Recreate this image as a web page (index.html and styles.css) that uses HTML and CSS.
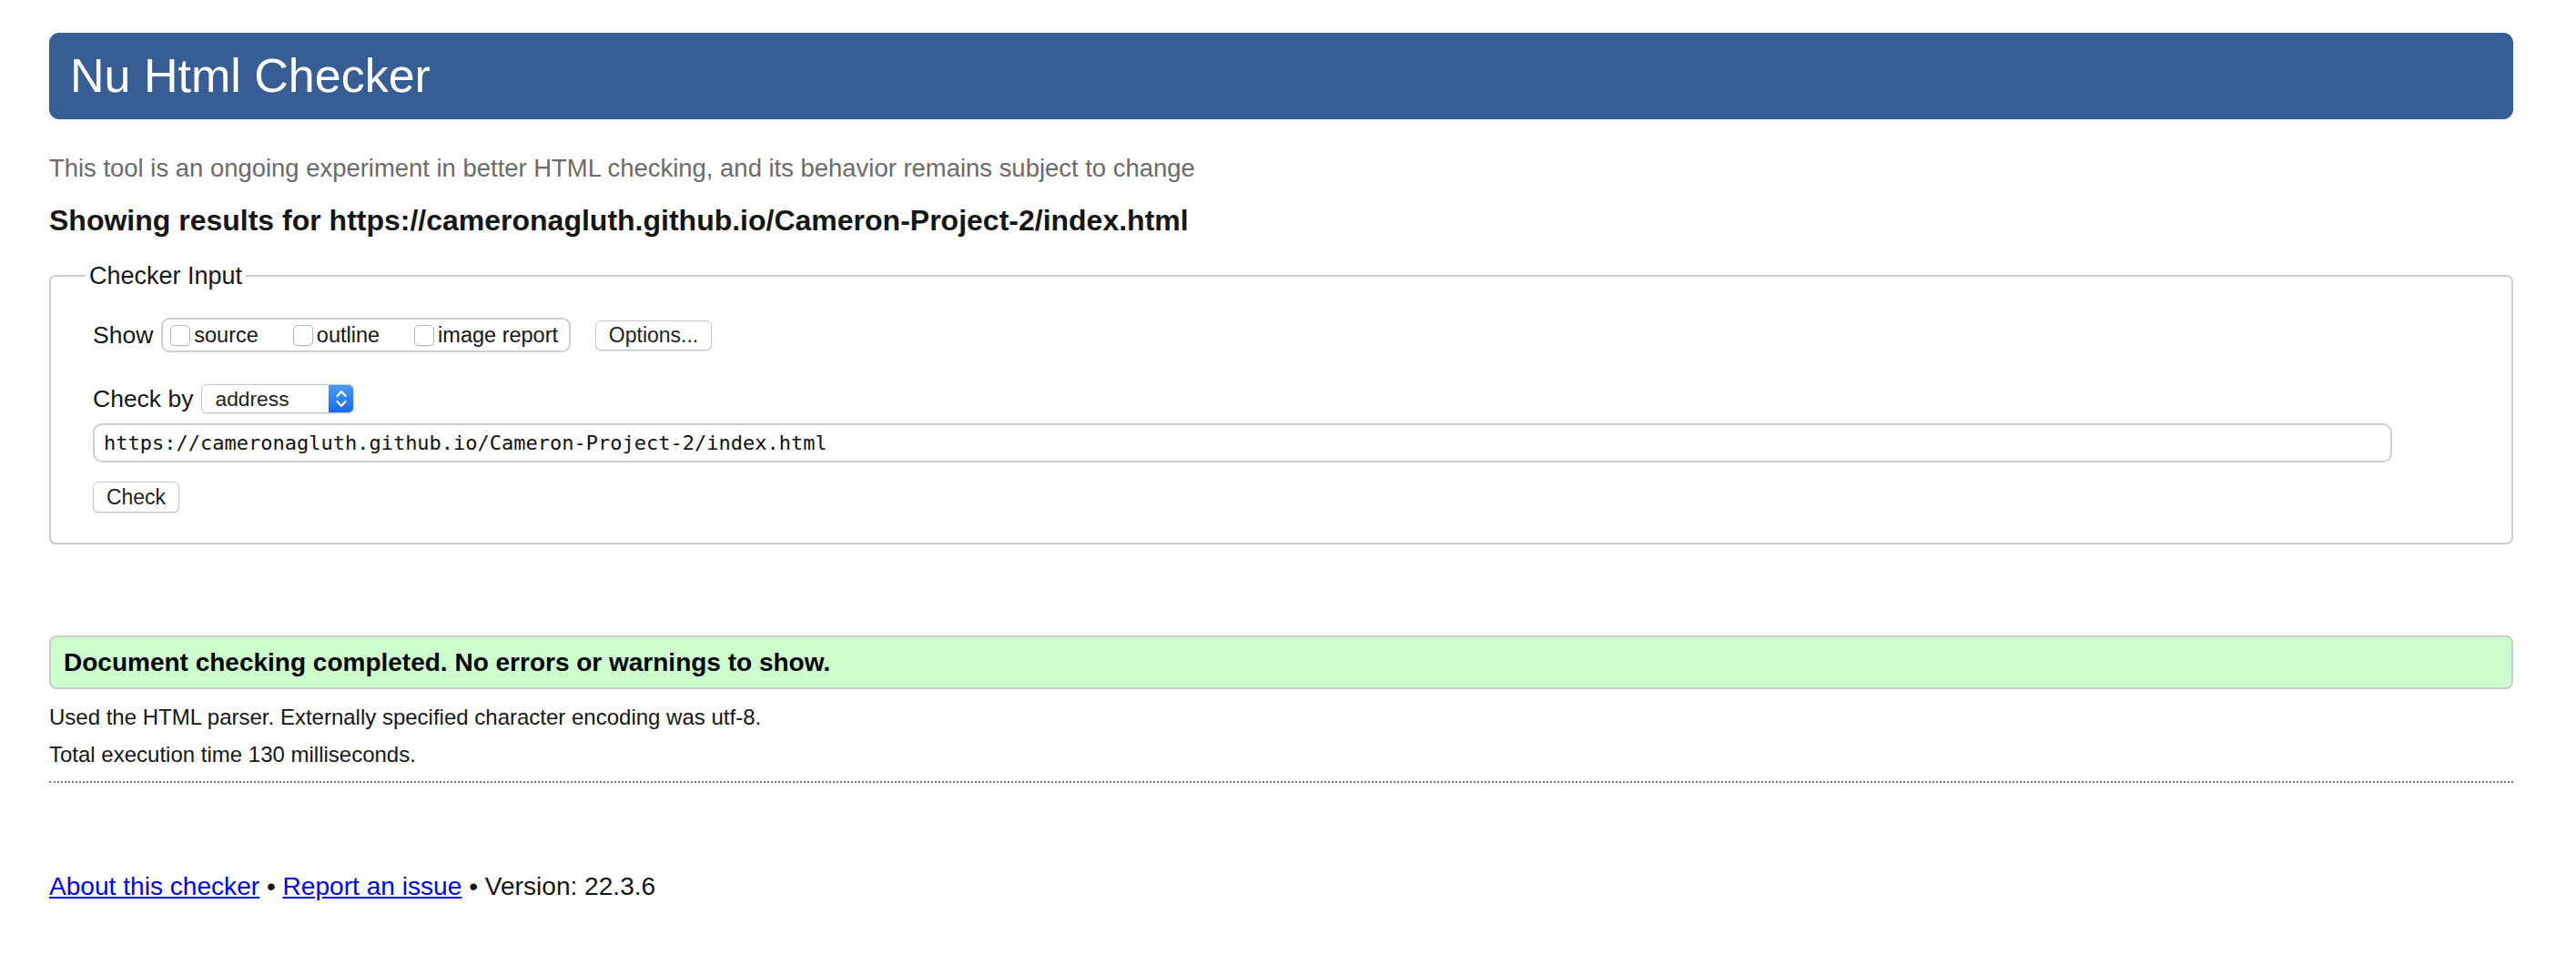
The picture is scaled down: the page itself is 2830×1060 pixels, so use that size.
FILE: index.html
```html
<!DOCTYPE html>
<html lang="en">
<head>
<meta charset="utf-8">
<title>Showing results for https://cameronagluth.github.io/Cameron-Project-2/index.html - Nu Html Checker</title>
<link rel="stylesheet" href="styles.css">
</head>
<body>
<h1 class="title">Nu Html Checker</h1>
<p class="tagline">This tool is an ongoing experiment in better HTML checking, and its behavior remains subject to change</p>
<h2 class="results-for">Showing results for https://cameronagluth.github.io/Cameron-Project-2/index.html</h2>
<fieldset class="checker">
  <legend class="checker-legend">Checker Input</legend>
  <div class="show-row">
    <span class="field-label">Show</span>
    <span class="show-group">
      <span class="check-opt"><span class="checkbox"></span><span class="check-text">source</span></span>
      <span class="check-opt"><span class="checkbox"></span><span class="check-text">outline</span></span>
      <span class="check-opt"><span class="checkbox"></span><span class="check-text">image report</span></span>
    </span>
    <span class="btn btn-options">Options...</span>
  </div>
  <div class="checkby-row">
    <span class="field-label">Check by</span>
    <span class="select">
      <span class="select-value">address</span>
      <span class="select-arrows"><svg width="14" height="24" viewBox="0 0 14 24"><path d="M2.5 9 L7 4 L11.5 9" fill="none" stroke="#fff" stroke-width="2.2" stroke-linecap="round" stroke-linejoin="round"/><path d="M2.5 15 L7 20 L11.5 15" fill="none" stroke="#fff" stroke-width="2.2" stroke-linecap="round" stroke-linejoin="round"/></svg></span>
    </span>
  </div>
  <div class="url-field">https://cameronagluth.github.io/Cameron-Project-2/index.html</div>
  <span class="btn btn-check">Check</span>
</fieldset>
<p class="success">Document checking completed. No errors or warnings to show.</p>
<p class="info">Used the HTML parser. Externally specified character encoding was utf-8.</p>
<p class="info info-second">Total execution time 130 milliseconds.</p>
<hr class="separator">
<p class="footer"><a href="#about" class="footer-link">About this checker</a> • <a href="#issue" class="footer-link">Report an issue</a> • Version: 22.3.6</p>
</body>
</html>
```
FILE: styles.css
```css
html, body {
  background: #fff;
}
body {
  margin: 0;
  padding: 0 69px 40px 54px;
  font-family: "Liberation Sans", Arial, Helvetica, sans-serif;
  color: #161616;
}
.title {
  margin: 36px 0 0;
  height: 95px;
  line-height: 95px;
  padding: 0 23px;
  font-size: 52px;
  font-weight: normal;
  color: #fff;
  background: #365d94;
  border-radius: 11px;
}
.tagline {
  margin: 39px 0 0;
  font-size: 27.45px;
  line-height: 30px;
  color: #6b6b6b;
}
.results-for {
  margin: 25px 0 0;
  font-size: 32px;
  line-height: 34px;
  font-weight: bold;
  color: #161616;
}
.checker {
  margin: 29px 0 0;
  padding: 31px 30px 33px 46px;
  border: 2px solid #cdcdcd;
  border-radius: 7px;
  min-width: 0;
}
.checker-legend {
  margin-left: -8px;
  padding: 0 4px;
  font-size: 27px;
  line-height: 30px;
}
.show-row {
  display: flex;
  align-items: center;
  height: 38px;
}
.field-label {
  font-size: 26.5px;
  line-height: 30px;
}
.show-group {
  display: flex;
  align-items: center;
  gap: 38px;
  box-sizing: border-box;
  height: 38px;
  margin-left: 9px;
  padding: 0 12px 0 8px;
  border: 2px solid #cfcfcf;
  border-radius: 9px;
}
.check-opt {
  display: flex;
  align-items: center;
  gap: 4px;
}
.checkbox {
  box-sizing: border-box;
  width: 22px;
  height: 23px;
  border: 1px solid #b5b5b5;
  border-radius: 5px;
  background: #fff;
  box-shadow: 0 1px 1px rgba(0, 0, 0, 0.08);
}
.check-text {
  font-size: 23.5px;
  line-height: 28px;
}
.btn {
  display: inline-flex;
  align-items: center;
  justify-content: center;
  box-sizing: border-box;
  border: 1px solid #c8c8c8;
  border-radius: 6px;
  background: #fff;
  box-shadow: 0 1px 1px rgba(0, 0, 0, 0.12);
  font-size: 23px;
  color: #1f1f1f;
}
.btn-options {
  margin-left: 27px;
  width: 128px;
  height: 33px;
}
.checkby-row {
  display: flex;
  align-items: center;
  height: 32px;
  margin-top: 35px;
}
.select {
  display: flex;
  box-sizing: border-box;
  width: 168px;
  height: 32px;
  margin-left: 9px;
  border: 1px solid #c9c9c9;
  border-radius: 6px;
  background: #fff;
  box-shadow: 0 1px 1px rgba(0, 0, 0, 0.1);
  overflow: hidden;
}
.select-value {
  flex: 1;
  padding-left: 14px;
  font-size: 22.8px;
  line-height: 30px;
  color: #1f1f1f;
}
.select-arrows {
  display: flex;
  align-items: center;
  justify-content: center;
  width: 27px;
  background: linear-gradient(#4b9bfb, #1769f3);
}
.url-field {
  box-sizing: border-box;
  width: 2526px;
  height: 43px;
  margin-top: 11px;
  padding-left: 10px;
  border: 2px solid #cfcfcf;
  border-radius: 10px;
  font-family: "DejaVu Sans Mono", "Liberation Mono", monospace;
  font-size: 22px;
  line-height: 39px;
  color: #111;
}
.btn-check {
  display: flex;
  width: 95px;
  height: 34px;
  margin-top: 21px;
}
.success {
  margin: 100px 0 0;
  box-sizing: border-box;
  height: 59px;
  padding: 0 14px;
  border: 2px solid #cccccc;
  border-radius: 8px;
  background: #ccffcc;
  font-size: 28px;
  font-weight: bold;
  line-height: 55px;
  color: #000;
}
.info {
  margin: 16px 0 0;
  font-size: 24px;
  line-height: 30px;
}
.info-second {
  margin-top: 11px;
}
.separator {
  margin: 14px 0 0;
  height: 0;
  border: 0;
  border-top: 2px dotted #7a7a7a;
}
.footer {
  margin: 99px 0 0;
  font-size: 28.1px;
  line-height: 30px;
}
.footer-link {
  color: #0000ee;
}
```
